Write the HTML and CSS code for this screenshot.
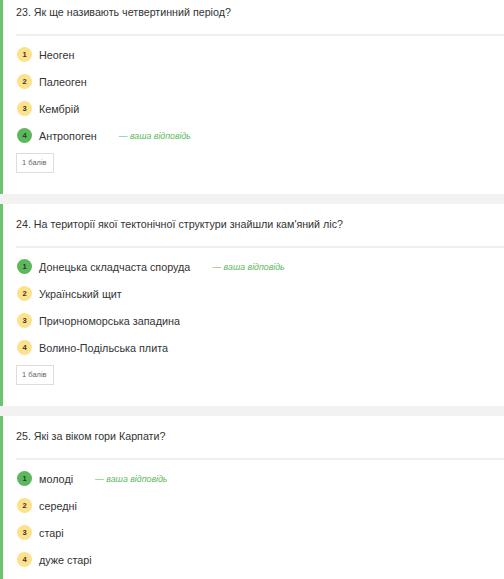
FILE: index.html
```html
<!DOCTYPE html>
<html lang="uk">
<head>
<meta charset="utf-8">
<link rel="stylesheet" href="styles.css">
</head>
<body>
<div class="list">
  <section class="card first">
    <div class="q">23. Як ще називають четвертинний період?</div>
    <div class="opts">
      <div class="opt"><span class="num">1</span><span class="txt">Неоген</span></div>
      <div class="opt"><span class="num">2</span><span class="txt">Палеоген</span></div>
      <div class="opt"><span class="num">3</span><span class="txt">Кембрій</span></div>
      <div class="opt"><span class="num ok">4</span><span class="txt">Антропоген</span><span class="mine">— ваша відповідь</span></div>
    </div>
    <div class="score">1 балів</div>
  </section>
  <section class="card">
    <div class="q">24. На території якої тектонічної структури знайшли кам'яний ліс?</div>
    <div class="opts">
      <div class="opt"><span class="num ok">1</span><span class="txt">Донецька складчаста споруда</span><span class="mine">— ваша відповідь</span></div>
      <div class="opt"><span class="num">2</span><span class="txt">Український щит</span></div>
      <div class="opt"><span class="num">3</span><span class="txt">Причорноморська западина</span></div>
      <div class="opt"><span class="num">4</span><span class="txt">Волино-Подільська плита</span></div>
    </div>
    <div class="score">1 балів</div>
  </section>
  <section class="card">
    <div class="q">25. Які за віком гори Карпати?</div>
    <div class="opts">
      <div class="opt"><span class="num ok">1</span><span class="txt">молоді</span><span class="mine">— ваша відповідь</span></div>
      <div class="opt"><span class="num">2</span><span class="txt">середні</span></div>
      <div class="opt"><span class="num">3</span><span class="txt">старі</span></div>
      <div class="opt"><span class="num">4</span><span class="txt">дуже старі</span></div>
    </div>
  </section>
</div>
</body>
</html>
```
FILE: styles.css
```css
html, body {
  margin: 0;
  padding: 0;
  background: #f2f2f2;
  font-family: "Liberation Sans", Arial, sans-serif;
  color: #333;
  overflow: hidden;
}
.list {
  display: flex;
  flex-direction: column;
  gap: 10px;
  margin-top: -8px;
}
.card {
  background: #fff;
  border-left: 3px solid #6cc46c;
  padding: 13px 0 21px 13px;
  display: flex;
  flex-direction: column;
}
.q {
  font-size: 10.7px;
  line-height: 15px;
  padding-bottom: 14px;
  border-bottom: 2px solid #efefef;
  white-space: nowrap;
}
.opts {
  display: flex;
  flex-direction: column;
  padding-top: 5px;
}
.opt {
  display: flex;
  align-items: center;
  height: 27px;
}
.num {
  width: 15px;
  height: 15px;
  border-radius: 50%;
  background: #fde18b;
  color: #333;
  font-size: 7.5px;
  font-weight: bold;
  display: flex;
  align-items: center;
  justify-content: center;
  margin-left: 1px;
  margin-right: 7px;
  flex: none;
}
.num.ok {
  background: #5cb85c;
}
.txt {
  font-size: 10.8px;
}
.mine {
  font-size: 8.8px;
  font-style: italic;
  color: #5cb85c;
  margin-left: 22px;
}
.score {
  margin-top: 4px;
  align-self: flex-start;
  border: 1px solid #ddd;
  font-size: 7.5px;
  color: #666;
  padding: 5px 5px;
  width: 26px;
  line-height: 8px;
}
```
